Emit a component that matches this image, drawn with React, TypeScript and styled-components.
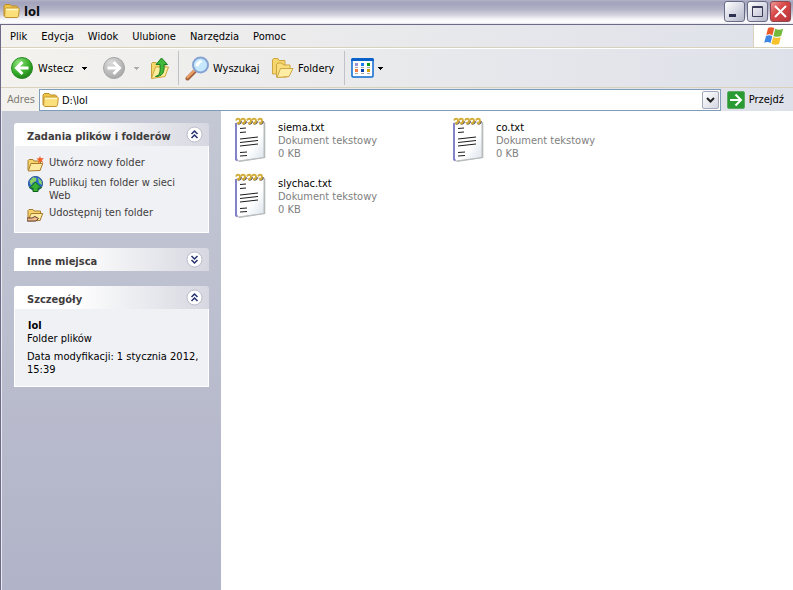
import React from "react";
import styled, { createGlobalStyle, css } from "styled-components";

const font = `"DejaVu Sans Condensed", "Noto Sans", sans-serif`;

const Global = createGlobalStyle`
  * { box-sizing: border-box; }
  html, body, #root { height: 100%; }
  body { margin: 0; overflow: hidden; font: 11px/13px ${font}; color: #000; background: #fff; }
  button, input { font: inherit; color: inherit; }
  h1, h2, p, ul { margin: 0; padding: 0; font: inherit; }
  ul { list-style: none; }
  svg { display: block; flex: none; }
`;

const Window = styled.div`
  display: flex;
  flex-direction: column;
  min-height: 100%;
`;

const TitleBar = styled.header`
  display: flex;
  align-items: center;
  gap: 4px;
  height: 24px;
  padding: 0 2px 2px 3px;
  background: linear-gradient(#b4b4c8 0, #a4a4bd 2px, #a6a6be 5px, #b7b7ca 10px, #d3d3de 15px, #f4f4f8 19px, #fff 22px, #e4e4ec 24px);
`;

const Title = styled.h1`
  flex: 1;
  padding-top: 2px;
  font-size: 13px;
  line-height: 16px;
  font-weight: bold;
  color: #0e1010;
`;

const CaptionButtons = styled.div`
  display: flex;
  gap: 2px;
`;

const CaptionButton = styled.button<{ $close?: boolean }>`
  display: grid;
  place-items: center;
  width: 21px;
  height: 21px;
  padding: 0;
  border: 1px solid ${(p) => (p.$close ? "#8d4650" : "#686b86")};
  border-radius: 3px;
  background: ${(p) =>
    p.$close
      ? "linear-gradient(135deg, #ea9a98, #d94a49 40%, #b8343a)"
      : "linear-gradient(135deg, #fff, #dadbe6 50%, #b4b6ca)"};
`;

const Frame = styled.div`
  flex: 1;
  display: flex;
  flex-direction: column;
  border-top: 1px solid #6d6a88;
  border-left: 1px solid #6d6a88;
`;

const chrome = css`
  background: linear-gradient(90deg, #f3f2ee, #dfe1ea);
`;

const MenuRow = styled.nav`
  display: flex;
  height: 23px;
  border-bottom: 1px solid #d8d2bd;
  ${chrome}
`;

const MenuItems = styled.div`
  flex: 1;
  display: flex;
  align-items: center;
  gap: 14px;
  padding-left: 9px;
`;

const PlainButton = styled.button`
  padding: 0;
  border: 0;
  background: none;
  white-space: nowrap;
`;

const Brand = styled.div`
  display: grid;
  place-items: center;
  width: 40px;
  border-left: 1px solid #d8d2bd;
  background: #fff;
`;

const Toolbar = styled.div`
  display: flex;
  align-items: center;
  height: 40px;
  padding-left: 9px;
  border-top: 1px solid #fff;
  border-bottom: 1px solid #d8d2bd;
  ${chrome}
`;

const ToolButton = styled(PlainButton)<{ $width: number; $gap?: number }>`
  display: flex;
  align-items: center;
  gap: 4px;
  width: ${(p) => p.$width}px;
  > svg + svg, > span + svg { margin-left: ${(p) => p.$gap ?? 0}px; }
`;

const Separator = styled.div`
  align-self: stretch;
  width: 1px;
  margin: 2px 6px 2px 0;
  background: #c1c2c9;
`;

const AddressBar = styled.form`
  display: flex;
  align-items: center;
  height: 23px;
  padding: 0 9px 0 6px;
  ${chrome}
`;

const AddressLabel = styled.label`
  width: 32px;
  color: #7f7c73;
`;

const AddressField = styled.div`
  flex: 1;
  display: flex;
  align-items: center;
  gap: 3px;
  height: 22px;
  padding: 1px 1px 1px 2px;
  border: 1px solid #7f9db9;
  background: #fff;
`;

const AddressInput = styled.input`
  flex: 1;
  min-width: 0;
  padding: 2px 0 0;
  border: 0;
  outline: 0;
  background: none;
`;

const DropButton = styled.button`
  display: grid;
  place-items: center;
  width: 17px;
  height: 18px;
  padding: 0;
  border: 1px solid #a5a8ba;
  border-radius: 2px;
  background: linear-gradient(135deg, #fff, #d5d7e2);
`;

const GoButton = styled(PlainButton)`
  display: flex;
  align-items: center;
  gap: 4px;
  margin-left: 6px;
`;

const Body = styled.div`
  flex: 1;
  display: flex;
`;

const Sidebar = styled.aside`
  display: flex;
  flex-direction: column;
  gap: 15px;
  width: 220px;
  padding: 12px;
  border-left: 1px solid #e9eaf0;
  background: linear-gradient(#c4c8d4, #b1b3c8);
`;

const PanelHead = styled.div`
  display: flex;
  align-items: center;
  justify-content: space-between;
  height: 23px;
  padding: 0 6px 0 13px;
  border-radius: 3px 3px 0 0;
  background: linear-gradient(90deg, #fff 30%, #d6d7e0);
`;

const PanelTitle = styled.h2`
  padding-top: 3px;
  font-weight: bold;
  color: #3f3d3d;
`;

const PanelBody = styled.div`
  padding: 10px 8px 10px 12px;
  border: 1px solid #fff;
  border-top: 0;
  background: #f0f1f5;
`;

const TaskList = styled.ul`
  display: flex;
  flex-direction: column;
  gap: 4px;
`;

const TaskLink = styled.a`
  display: flex;
  gap: 5px;
  min-height: 16px;
  padding-right: 16px;
  color: #3f3d3d;
  text-decoration: none;
`;

const TaskIcon = styled.span`
  flex: none;
  height: 16px;
`;

const Details = styled.div`
  strong { display: block; padding-left: 1px; }
  p + p { margin-top: 5px; }
`;

const Files = styled.main`
  flex: 1;
  display: grid;
  grid-template-columns: repeat(auto-fill, 218px);
  grid-auto-rows: 56px;
  padding: 6px 0 0 12px;
`;

const File = styled.article`
  display: flex;
  align-items: flex-start;
  gap: 11px;
`;

const FileText = styled.div`
  padding-top: 4px;
  p { color: #808080; }
`;

const Folder = () => (
  <svg width="17" height="16" viewBox="0 0 17 16">
    <path d="M1 13V3l1.500-1.500H7L8.500 3h5l1 1v9z" fill="#f0c649" stroke="#b98a28" />
    <path d="M2 6.500c0-1 .5-1.500 1.500-1.500H15c1 0 1.500.5 1.300 1.500L15.500 13c-.1 1-.6 1.500-1.500 1.500H3c-.8 0-1.300-.5-1.300-1.500z" fill="#fbdf7b" stroke="#c2942f" />
    <path d="M3 6.500h12" stroke="#fff6c4" strokeWidth="1.500" />
  </svg>
);

const ArrowDisc = ({ back }: { back?: boolean }) => (
  <svg width="24" height="24" viewBox="0 0 24 24">
    <defs>
      <radialGradient id={back ? "back" : "fwd"} cx=".35" cy=".25" r=".8">
        <stop offset="0" stopColor={back ? "#8fe07c" : "#dadada"} />
        <stop offset=".6" stopColor={back ? "#38b02b" : "#bcbcbc"} />
        <stop offset="1" stopColor={back ? "#1d7c18" : "#a6a6a6"} />
      </radialGradient>
    </defs>
    <circle cx="12" cy="12" r="10.500" fill={`url(#${back ? "back" : "fwd"})`} stroke={back ? "#2a8a25" : "#a4a4a4"} />
    <path d={back ? "M18.500 12H7.500M12.500 6L6.500 12l6 6" : "M5.500 12h11M11.500 6l6 6-6 6"} fill="none" stroke="#fff" strokeWidth="3" />
  </svg>
);

const Caret = ({ color = "#000" }: { color?: string }) => (
  <svg width="5" height="3" viewBox="0 0 5 3" shapeRendering="crispEdges"><path d="M0 0h5v1H0zM1 1h3v1H1zM2 2h1v1H2z" fill={color} /></svg>
);

const UpFolder = () => (
  <svg width="20" height="24" viewBox="0 0 20 24">
    <path d="M1.500 22V7.500l1-1H6l1.500 2H15V20z" fill="#f6d96c" stroke="#c69d36" />
    <path d="M1.500 22.500L5.500 11H18.500l-3.500 9.500z" fill="#fdee9e" stroke="#cfa53c" />
    <path d="M5.500 20.500c4.500-1 5-4.500 4.500-12H6L11.500 2 17.500 8.500H14c.8 8-1.500 12-8.500 12z" fill="#40b83a" stroke="#1d7c20" />
  </svg>
);

const Search = () => (
  <svg width="24" height="25" viewBox="0 0 24 25">
    <path d="M2.500 22.500L9.500 15.500" stroke="#a2603c" strokeWidth="4" strokeLinecap="round" />
    <path d="M2.500 21.500L9.500 14.500" stroke="#f0a262" strokeWidth="2" strokeLinecap="round" />
    <circle cx="15.500" cy="9" r="7.500" fill="#c6e8fd" stroke="#86a3d2" strokeWidth="2" />
    <path d="M10.500 10c0-3 2-5.500 6-5.500 2 2-2 2-3 6z" fill="#fff" />
  </svg>
);

const Folders = () => (
  <svg width="23" height="22" viewBox="0 0 23 22">
    <path d="M1.500 17V2.500L3 1.500h4l1 2h6V8L5 17z" fill="#f5d76e" stroke="#cfa443" />
    <path d="M5.500 20V7L7 6h4l1.500 2H19v4l-3 8z" fill="#f8de7d" stroke="#cfa443" />
    <path d="M6 20.500l3.500-9H22l-4 8z" fill="#fdeea4" stroke="#cfa443" />
  </svg>
);

const Views = () => (
  <svg width="23" height="20" viewBox="0 0 23 20">
    <rect x="1" y="1" width="21" height="18" rx="1" fill="#fff" stroke="#0a6ad0" strokeWidth="1.500" />
    <path d="M0 1.500L1 0h21l1 1.500V3H0z" fill="#0a62c8" />
    <path d="M4 5h3v3H4z" fill="#9a93d0" /><path d="M10 5h3v3h-3z" fill="#1d7df0" /><path d="M16 5h3v3h-3z" fill="#109a18" />
    <path d="M4 11h3v3H4z" fill="#f57b45" /><path d="M10 11h3v3h-3z" fill="#0a3ea8" /><path d="M16 11h3v3h-3z" fill="#d2a010" />
    <path d="M4 9h3v1H4zM10 9h3v1h-3zM16 9h3v1h-3zM4 15h3v1H4zM10 15h3v1h-3zM16 15h3v1h-3z" fill="#a8a8a8" />
  </svg>
);

const Flag = () => (
  <svg width="20" height="18" viewBox="0 0 20 18">
    <path d="M4 1C6-.3 8.500 0 10.300 1L8.500 8.300C6.500 7 4.500 7 2.300 8z" fill="#ea5b2c" />
    <path d="M11.200 1.700c2.300 1.300 5 1.500 8 .1l-2 7c-2.500 1.300-5.500 1.200-7.700.1z" fill="#74b83c" />
    <path d="M2 9c2.300-1.200 4.500-1.100 6.300.2L6.500 16C4.500 14.800 2.500 14.800.2 15.800z" fill="#3f86e4" />
    <path d="M9.200 9.900c2.300 1.200 5 1.300 7.600.1L15 17c-2.500 1.200-5.500 1-7.600-.3z" fill="#f7c22c" />
  </svg>
);

const Go = () => (
  <svg width="18" height="18" viewBox="0 0 18 18">
    <rect x=".5" y=".5" width="17" height="17" rx="1.500" fill="#2a9b33" stroke="#5fa866" />
    <path d="M3 9h11M8.500 3.500L14 9l-5.500 5.500" stroke="#fff" strokeWidth="2" fill="none" />
  </svg>
);

const Chevron = ({ open }: { open?: boolean }) => (
  <svg width="17" height="17" viewBox="0 0 17 17">
    <circle cx="8.500" cy="8.500" r="7.500" fill="#fff" stroke="#b9bbcb" />
    <path d={open ? "M5.500 8L8.500 5l3 3M5.500 12l3-3 3 3" : "M5.500 5l3 3 3-3M5.500 9l3 3 3-3"} fill="none" stroke="#26316f" strokeWidth="1.500" />
  </svg>
);

const Task = ({ kind }: { kind: "new" | "web" | "share" }) => (
  <svg width="17" height="17" viewBox="0 0 17 17">
    {kind === "web" ? (
      <>
        <circle cx="8.500" cy="7.500" r="7" fill="#2b6fd0" stroke="#1d4a94" />
        <path d="M2.500 5L6 1.300l3.500.7-.5 3-3 1.500-2 3zM11 1.800l3.500 3.200.5 4-3-2z" fill="#8fd065" />
        <path d="M8.500 6l6 6H11v3.500H6V12H2.500z" fill="#37b033" stroke="#12661a" />
      </>
    ) : (
      <>
        <path d="M1 14V4.500l1-1h4l1 1.500h6.500V14z" fill="#f5d26a" stroke="#a87c2e" />
        <path d="M1.200 15L4 7.500h11.800L13 14.500z" fill="#fdeaa0" stroke="#a87c2e" />
        {kind === "new" ? (
          <path d="M13 0l.9 2.200L16.800 2 15 4.200l1.200 2.800-2.700-1.500L11 7.500l.6-3L9.500 2.500l2.500-.2z" fill="#f2602a" />
        ) : (
          <path d="M0 12h5l3-1.500 3.500 2-2.500 2.500H0z" fill="#efb98c" stroke="#5d4030" />
        )}
      </>
    )}
  </svg>
);

const Note = () => (
  <svg width="34" height="46" viewBox="0 0 34 46">
    <defs>
      <linearGradient id="paper" x1="0" y1="0" x2="1" y2="1">
        <stop offset=".6" stopColor="#fff" />
        <stop offset="1" stopColor="#d9e2ea" />
      </linearGradient>
    </defs>
    <path d="M5 6l26.500-1 .8 1v35L6 45z" fill="#b4bcb4" />
    <path d="M3 6l28-1v35.500L5 44l-2-1z" fill="url(#paper)" stroke="#b9bcc0" />
    <path d="M3 6v36.500l1.500 1" stroke="#8482c8" strokeWidth="2" fill="none" />
    {[5, 10, 16, 21, 27].map((x) => (
      <g key={x} fill="none">
        <path d={`M${x} 7c2 0 3-1.500 3-3`} stroke="#56515c" strokeWidth="1.500" />
        <path d={`M${x - 2} 3.500C${x - 1} 1 ${x + 2} 1.500 ${x + 2} 3.500S${x + 1} 6.500 ${x - 1} 6.500`} stroke="#d3ad3a" strokeWidth="2" />
      </g>
    ))}
    <path d="M7 11.500l6-.5M7 15.500l6-.5M7 22l18-2M7 25.500l18-2M7 29l18-2M7 35.500l7-.5M7 39l7-.5" stroke="#1d1d1d" />
  </svg>
);

const files = ["siema.txt", "co.txt", "slychac.txt"];
const menus = ["Plik", "Edycja", "Widok", "Ulubione", "Narzędzia", "Pomoc"];

const Panel = ({ title, open, children }: { title: string; open?: boolean; children?: React.ReactNode }) => (
  <section>
    <PanelHead>
      <PanelTitle>{title}</PanelTitle>
      <PlainButton aria-label={title} aria-expanded={!!open}><Chevron open={open} /></PlainButton>
    </PanelHead>
    {children && <PanelBody>{children}</PanelBody>}
  </section>
);

export default function App() {
  return (
    <Window>
      <Global />
      <TitleBar>
        <Folder />
        <Title>lol</Title>
        <CaptionButtons>
          <CaptionButton aria-label="Minimalizuj"><svg width="13" height="13"><path d="M1 9h7v3H1z" fill="#2e3050" /></svg></CaptionButton>
          <CaptionButton aria-label="Maksymalizuj"><svg width="13" height="13"><path d="M1.500 1.500h10v10h-10zM1 2.500h11" fill="none" stroke="#3b3d58" /></svg></CaptionButton>
          <CaptionButton $close aria-label="Zamknij"><svg width="13" height="13"><path d="M1 1l11 11M12 1L1 12" stroke="#fff" strokeWidth="2" /></svg></CaptionButton>
        </CaptionButtons>
      </TitleBar>
      <Frame>
        <MenuRow>
          <MenuItems>{menus.map((m) => <PlainButton key={m}>{m}</PlainButton>)}</MenuItems>
          <Brand><Flag /></Brand>
        </MenuRow>
        <Toolbar>
          <ToolButton $width={92} $gap={4}><ArrowDisc back /><span>Wstecz</span><Caret /></ToolButton>
          <ToolButton $width={48} $gap={4} disabled aria-label="Dalej"><ArrowDisc /><Caret color="#aaa" /></ToolButton>
          <ToolButton $width={28} aria-label="W górę"><UpFolder /></ToolButton>
          <Separator />
          <ToolButton $width={86}><Search />Wyszukaj</ToolButton>
          <ToolButton $width={73}><Folders />Foldery</ToolButton>
          <Separator />
          <ToolButton $width={32} aria-label="Widoki"><Views /><Caret /></ToolButton>
        </Toolbar>
        <AddressBar onSubmit={(e) => e.preventDefault()}>
          <AddressLabel htmlFor="address">Adres</AddressLabel>
          <AddressField>
            <Folder />
            <AddressInput id="address" defaultValue="D:\lol" />
            <DropButton type="button" aria-label="Lista adresów"><svg width="9" height="6"><path d="M1 1l3.500 3.500L8 1" fill="none" stroke="#222" strokeWidth="2" /></svg></DropButton>
          </AddressField>
          <GoButton><Go />Przejdź</GoButton>
        </AddressBar>
        <Body>
          <Sidebar>
            <Panel title="Zadania plików i folderów" open>
              <TaskList>
                <li><TaskLink href="#new"><TaskIcon><Task kind="new" /></TaskIcon>Utwórz nowy folder</TaskLink></li>
                <li><TaskLink href="#web"><TaskIcon><Task kind="web" /></TaskIcon>Publikuj ten folder w sieci Web</TaskLink></li>
                <li><TaskLink href="#share"><TaskIcon><Task kind="share" /></TaskIcon>Udostępnij ten folder</TaskLink></li>
              </TaskList>
            </Panel>
            <Panel title="Inne miejsca" />
            <Panel title="Szczegóły" open>
              <Details>
                <strong>lol</strong>
                <p>Folder plików</p>
                <p>Data modyfikacji: 1 stycznia 2012, 15:39</p>
              </Details>
            </Panel>
          </Sidebar>
          <Files>
            {files.map((f) => (
              <File key={f}><Note /><FileText><h2>{f}</h2><p>Dokument tekstowy</p><p>0 KB</p></FileText></File>
            ))}
          </Files>
        </Body>
      </Frame>
    </Window>
  );
}
